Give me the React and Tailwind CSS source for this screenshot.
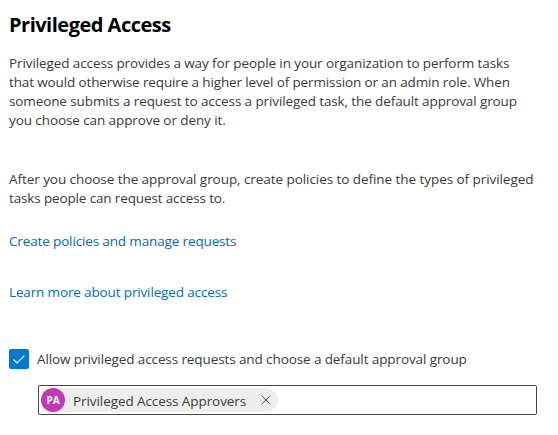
import { useState } from "react";

const INTRO_LINES = [
  { text: "Privileged access provides a way for people in your organization to perform tasks", spacing: "tracking-[-0.1px]" },
  { text: "that would otherwise require a higher level of permission or an admin role. When", spacing: "tracking-[-0.13px]" },
  { text: "someone submits a request to access a privileged task, the default approval group", spacing: "tracking-[-0.11px]" },
  { text: "you choose can approve or deny it.", spacing: "tracking-[-0.09px]" },
];

const POLICY_LINES = [
  { text: "After you choose the approval group, create policies to define the types of privileged", spacing: "tracking-[-0.06px]" },
  { text: "tasks people can request access to.", spacing: "tracking-[-0.14px]" },
];

function Paragraph({ lines, className }) {
  return (
    <p className={className}>
      {lines.map((line) => (
        <span key={line.text} className={`block whitespace-nowrap ${line.spacing}`}>
          {line.text}
        </span>
      ))}
    </p>
  );
}

function ApproverChip({ initials, name, onRemove }) {
  return (
    <div className="flex h-6 items-center rounded-full bg-[#ededed]">
      <span className="flex size-6 items-center justify-center rounded-full bg-[#c239b3] text-[10px] font-bold text-white">
        {initials}
      </span>
      <span className="ml-2 w-[180px] whitespace-nowrap pt-0.5 leading-6 tracking-[-0.08px]">{name}</span>
      <button type="button" aria-label="Remove" onClick={onRemove} className="flex h-6 w-[25px] items-center pl-[8px]">
        <svg width="10" height="10" viewBox="0 0 10 10" fill="none" stroke="#555555">
          <path d="M0.8 0.8 9.2 9.2M9.2 0.8 0.8 9.2" />
        </svg>
      </button>
    </div>
  );
}

export default function App() {
  const [allowed, setAllowed] = useState(true);
  const [approvers, setApprovers] = useState([{ initials: "PA", name: "Privileged Access Approvers" }]);

  return (
    <main className="h-[435px] overflow-hidden bg-white pl-[9px] pt-3 font-['Open_Sans','Noto_Sans',sans-serif] text-[13.5px] leading-[19px] text-[#3b3a39]">
      <h1 className="text-[20px] font-bold leading-[26px] tracking-[-0.5px] text-black">Privileged Access</h1>

      <Paragraph lines={INTRO_LINES} className="mt-4" />
      <Paragraph lines={POLICY_LINES} className="mt-10" />

      <div className="mt-6 flex flex-col items-start gap-8">
        <a href="#policies" className="tracking-[-0.14px] text-[#006cbe]">Create policies and manage requests</a>
        <a href="#learn" className="tracking-[-0.14px] text-[#006cbe]">Learn more about privileged access</a>
      </div>

      <button
        type="button"
        role="checkbox"
        aria-checked={allowed}
        onClick={() => setAllowed(!allowed)}
        className="mt-[47px] flex h-5 items-center gap-2"
      >
        <span className="flex size-5 items-center justify-center rounded-[2px] bg-[#0078d4]">
          {allowed && (
            <svg width="12" height="9" viewBox="0 0 12 9" fill="none" stroke="white" strokeWidth="1.2">
              <path d="M0.5 4.5 4 8 11.4 0.6" />
            </svg>
          )}
        </span>
        <span className="whitespace-nowrap tracking-[-0.1px]">
          Allow privileged access requests and choose a default approval group
        </span>
      </button>

      <div className="ml-[29px] mt-4 flex h-[30px] w-[499px] items-center rounded-[2px] border border-[#484644] pl-[2px]">
        {approvers.map((a) => (
          <ApproverChip key={a.name} initials={a.initials} name={a.name} onRemove={() => setApprovers([])} />
        ))}
      </div>
    </main>
  );
}
